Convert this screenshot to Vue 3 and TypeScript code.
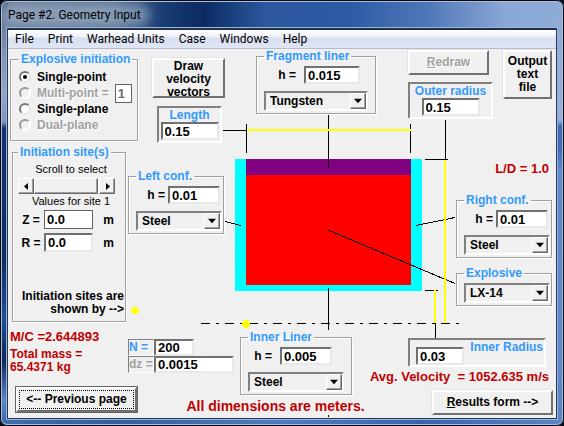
<script setup lang="ts">
import { reactive, ref } from 'vue'

const menus = ['File', 'Print', 'Warhead Units', 'Case', 'Windows', 'Help']
const materials = ['Steel', 'Tungsten', 'Aluminum', 'Copper']
const explosives = ['LX-14', 'Comp B', 'Octol']

const modes = [
  { id: 'single-point', label: 'Single-point', disabled: false },
  { id: 'multi-point', label: 'Multi-point =', disabled: true },
  { id: 'single-plane', label: 'Single-plane', disabled: false },
  { id: 'dual-plane', label: 'Dual-plane', disabled: true },
]

const mode = ref('single-point')
const site = ref(1)
const form = reactive({
  points: '1',
  z: '0.0',
  r: '0.0',
  length: '0.15',
  outerRadius: '0.15',
  innerRadius: '0.03',
  n: '200',
  dz: '0.0015',
  explosive: 'LX-14',
  fragment: { h: '0.015', material: 'Tungsten' },
  left: { h: '0.01', material: 'Steel' },
  right: { h: '0.01', material: 'Steel' },
  inner: { h: '0.005', material: 'Steel' },
})
</script>

<template>
  <div class="window">
    <header class="titlebar"><span class="title">Page #2. Geometry Input</span></header>
    <div class="client">
      <nav class="menu">
        <a v-for="item in menus" :key="item" href="#">{{ item }}</a>
      </nav>
      <main class="form">
        <svg class="drawing" viewBox="0 49 548 369" preserveAspectRatio="none" aria-hidden="true">
          <g transform="translate(-8 0)" shape-rendering="crispEdges">
            <rect x="235" y="159" width="187" height="132" fill="#00ffff" />
            <rect x="246" y="175" width="165" height="110" fill="#ff0000" />
            <rect x="246" y="159" width="165" height="16" fill="#800080" />
            <g stroke="#000" fill="none">
              <path d="M223 130.500H246M246.500 124V153M410.500 124V153M328.500 115V168" />
              <path d="M445.500 120V160M425 159.500H448M425 290.500H438M435.500 323V338M328.500 288V330" />
              <path d="M201 323.500H460" stroke-dasharray="9 6 3 6" />
              <path d="M328.500 395V396M328.500 415V417" />
              <path d="M225 221.500L241 225.500M416 225.500L455 217.500M328 230L455 283.500" />
            </g>
            <g fill="#ffff00">
              <rect x="247" y="129" width="164" height="2" />
              <rect x="444" y="160" width="2" height="163" />
              <rect x="434" y="290" width="2" height="33" />
              <ellipse cx="135" cy="310.500" rx="4" ry="3.300" />
              <circle cx="246" cy="324" r="4" />
            </g>
          </g>
        </svg>

        <div class="columns">
          <div class="col col-a">
            <fieldset class="group modes">
              <legend>Explosive initiation</legend>
              <div v-for="m in modes" :key="m.id" class="mode">
                <input :id="m.id" v-model="mode" type="radio" name="mode" :value="m.id" :disabled="m.disabled" />
                <label :for="m.id" :class="{ off: m.disabled }">{{ m.label }}</label>
                <input v-if="m.id === 'multi-point'" v-model="form.points" class="box flat points" aria-label="Number of points" disabled />
              </div>
            </fieldset>

            <fieldset class="group sites">
              <legend>Initiation site(s)</legend>
              <label class="thin" for="site">Scroll to select</label>
              <div class="scroller">
                <button type="button" aria-label="Previous site"><svg viewBox="0 0 5 7"><path d="M4 0V7L0 3.500Z" /></svg></button>
                <input id="site" v-model.number="site" type="range" min="1" max="2" />
                <button type="button" aria-label="Next site"><svg viewBox="0 0 5 7"><path d="M1 0V7L5 3.500Z" /></svg></button>
              </div>
              <p class="thin">Values for site {{ site }}</p>
              <div class="coord">
                <label for="z">Z =</label><input id="z" v-model="form.z" class="box flat" /><span>m</span>
              </div>
              <div class="coord">
                <label for="r">R =</label><input id="r" v-model="form.r" class="box" /><span>m</span>
              </div>
              <p class="hint">Initiation sites are<br />shown by --&gt;</p>
            </fieldset>

            <p class="result ratio">M/C =2.644893</p>
            <p class="mass">Total mass =<br />65.4371 kg</p>
          </div>

          <div class="col col-b">
            <button type="button" class="btn draw">Draw<br />velocity<br />vectors</button>
            <div class="panel length">
              <label for="length">Length</label>
              <input id="length" v-model="form.length" class="box" />
            </div>
            <fieldset class="group left">
              <legend>Left conf.</legend>
              <div class="row"><label for="left-h">h =</label><input id="left-h" v-model="form.left.h" class="box" /></div>
              <div class="combo">
                <select v-model="form.left.material" aria-label="Left material"><option v-for="m in materials" :key="m">{{ m }}</option></select>
                <svg viewBox="0 0 7 4"><path d="M0 0H7L3.500 4Z" /></svg>
              </div>
            </fieldset>
            <div class="mesh">
              <label for="n">N =</label><input id="n" v-model="form.n" class="box short" />
              <label for="dz" class="grey">dz =</label><input id="dz" v-model="form.dz" class="box" />
            </div>
          </div>

          <div class="col col-c">
            <fieldset class="group fragment">
              <legend>Fragment liner</legend>
              <div class="row"><label for="frag-h">h =</label><input id="frag-h" v-model="form.fragment.h" class="box" /></div>
              <div class="combo">
                <select v-model="form.fragment.material" aria-label="Fragment material"><option v-for="m in materials" :key="m">{{ m }}</option></select>
                <svg viewBox="0 0 7 4"><path d="M0 0H7L3.500 4Z" /></svg>
              </div>
            </fieldset>
            <fieldset class="group inner">
              <legend>Inner Liner</legend>
              <div class="row"><label for="inner-h">h =</label><input id="inner-h" v-model="form.inner.h" class="box" /></div>
              <div class="combo">
                <select v-model="form.inner.material" aria-label="Inner material"><option v-for="m in materials" :key="m">{{ m }}</option></select>
                <svg viewBox="0 0 7 4"><path d="M0 0H7L3.500 4Z" /></svg>
              </div>
            </fieldset>
          </div>

          <div class="col col-d">
            <div class="top-right">
              <div class="stack">
                <button type="button" class="btn redraw" disabled><u>R</u>edraw</button>
                <div class="panel outer">
                  <label for="outer">Outer radius</label>
                  <input id="outer" v-model="form.outerRadius" class="box" />
                </div>
              </div>
              <button type="button" class="btn output">Output<br />text<br />file</button>
            </div>
            <p class="result ld">L/D = 1.0</p>
            <fieldset class="group right">
              <legend>Right conf.</legend>
              <div class="row"><label for="right-h">h =</label><input id="right-h" v-model="form.right.h" class="box" /></div>
              <div class="combo">
                <select v-model="form.right.material" aria-label="Right material"><option v-for="m in materials" :key="m">{{ m }}</option></select>
                <svg viewBox="0 0 7 4"><path d="M0 0H7L3.500 4Z" /></svg>
              </div>
            </fieldset>
            <fieldset class="group right explosive">
              <legend>Explosive</legend>
              <div class="combo">
                <select v-model="form.explosive" aria-label="Explosive"><option v-for="m in explosives" :key="m">{{ m }}</option></select>
                <svg viewBox="0 0 7 4"><path d="M0 0H7L3.500 4Z" /></svg>
              </div>
            </fieldset>
            <div class="panel inner-radius">
              <input id="inner-radius" v-model="form.innerRadius" class="box" />
              <label for="inner-radius">Inner Radius</label>
            </div>
            <p class="result velocity">Avg. Velocity&nbsp; = 1052.635 m/s</p>
          </div>
        </div>

        <footer class="footer">
          <button type="button" class="btn default"><span>&lt;-- Previous page</span></button>
          <p class="note">All dimensions are meters.</p>
          <button type="button" class="btn next"><span><u>R</u>esults form --&gt;</span></button>
        </footer>
      </main>
    </div>
  </div>
</template>

<style>
body {
  margin: 0;
  background: #05070f;
}
</style>

<style scoped>
* {
  box-sizing: border-box;
}

.window {
  min-height: 100vh;
  display: flex;
  flex-direction: column;
  padding: 0 8px 8px;
  border-radius: 7px;
  overflow: hidden;
  font: bold 12px/14px 'Liberation Sans', Arial, sans-serif;
  color: #000;
  box-shadow: inset 0 0 0 1px #05070f, inset 0 0 0 2px #a9bedb;
  background:
    linear-gradient(#56708f 0, #8796b5 60px, #93a4cb 95px, #8192bb 122px, #12336c 128px, #0e2c60 260px, #1e5296 320px, #0c2659 360px, #5c87c4 400px, #3465a8) left / 8px 100% no-repeat,
    linear-gradient(#8eabd6, #97afd9 120px, #3f6cb5 126px, #3f6cb5 150px, #5c8acb 170px, #5c85c4) right / 8px 100% no-repeat,
    linear-gradient(90deg, #3a6fae, #31609f 20%, #4c7dc0 50%, #3665ae 75%, #5b86c6) bottom / 100% 8px no-repeat,
    linear-gradient(90deg, #6c7f9c, #5d7694 20%, #183c73 29%, #0c2b62 36%, #2b579e 47%, #2c5ba4 62%, #4f78b9 76%, #8ca8d6 90%, #8eabd8);
}

.titlebar {
  height: 29px;
  display: flex;
  align-items: center;
  font: 12px/12px Roboto, 'Noto Sans', sans-serif;
}

.title {
  padding: 0 4px 0 0;
  border-radius: 6px;
  background: rgba(190, 205, 225, 0.4);
  box-shadow: 0 0 8px 5px rgba(190, 205, 225, 0.4);
}

.client {
  flex: 1;
  display: flex;
  flex-direction: column;
  border-top: 1px solid #1c2b46;
  box-shadow: 0 0 0 1px #22365c, 0 0 0 2px #9db4d6;
}

.menu {
  height: 19px;
  display: flex;
  gap: 14px;
  padding: 0 7px;
  background: linear-gradient(#fff 0, #eef1f9 7px, #d8dff0 8px, #dfe5f5 17px);
  border-bottom: 1px solid #b6bccc;
  font: 12px/19px Roboto, 'Noto Sans', sans-serif;
}

.menu a {
  color: #000;
  text-decoration: none;
}

.form {
  position: relative;
  flex: 1;
  background: #f0f0f0;
}

.drawing {
  position: absolute;
  inset: 0;
  width: 100%;
  height: 100%;
}

.columns {
  position: relative;
  display: grid;
  grid-template-columns: 120fr 112fr 160fr 156fr;
}

.col {
  display: flex;
  flex-direction: column;
  align-items: flex-start;
  min-width: 0;
}

p {
  margin: 0;
  white-space: nowrap;
}

label {
  white-space: nowrap;
}

/* etched frames */
.group {
  margin: 0;
  min-width: 0;
  padding: 3px 7px 2px;
  border: 1px solid #a0a0a0;
  box-shadow: 1px 1px 0 #fff, inset 1px 1px 0 #fff;
}

.group legend {
  height: 14px;
  padding: 0 2px;
  color: #3399ff;
  white-space: nowrap;
}

.row {
  display: flex;
  align-items: center;
  justify-content: flex-end;
  gap: 8px;
  height: 18px;
  margin-bottom: 7px;
}

/* text boxes */
.box {
  width: 52px;
  height: 18px;
  margin: 0;
  padding: 0 2px;
  border: 2px solid;
  border-color: #707070 #e8e8e8 #e8e8e8 #707070;
  background: #fff;
  color: #000;
  font: bold 13px/14px 'Liberation Sans', Arial, sans-serif;
  outline: none;
}

.box.flat {
  border: 1px solid #646464;
}

/* drop-downs */
.combo {
  display: grid;
  align-items: center;
  height: 20px;
  border: 2px solid;
  border-color: #808080 #fff #fff #808080;
}

.combo select,
.combo svg {
  grid-area: 1 / 1;
}

.combo select {
  width: 100%;
  height: 16px;
  padding: 0 18px 0 4px;
  border: 0;
  border-radius: 0;
  appearance: none;
  background: transparent;
  color: #000;
  font: inherit;
}

.combo svg {
  justify-self: end;
  width: 16px;
  height: 16px;
  padding: 4px 3px;
  border: 1px solid;
  border-color: #fff #696969 #696969 #fff;
  box-shadow: inset -1px -1px 0 #a0a0a0;
  background: #f0f0f0;
  pointer-events: none;
}

/* push buttons */
.btn {
  padding: 0;
  border: 2px solid;
  border-color: #fff #707070 #707070 #fff;
  box-shadow: -1px -1px 0 #e3e3e3;
  background: #f0f0f0;
  color: #000;
  font: inherit;
  line-height: 13px;
  white-space: nowrap;
}

.btn:disabled {
  color: #a0a0a0;
  text-shadow: 1px 1px 0 #fff;
}

/* sunken panels */
.panel {
  display: flex;
  border: 2px solid;
  border-color: #808080 #fff #fff #808080;
  color: #3399ff;
}

.col-a {
  padding: 3px 0 0 2px;
}

.modes {
  width: 128px;
  height: 89px;
  padding: 3px 6px 2px 8px;
}

.mode {
  display: flex;
  align-items: center;
  gap: 6px;
  height: 16px;
}

.mode input[type='radio'] {
  appearance: none;
  flex: none;
  display: grid;
  place-items: center;
  width: 12px;
  height: 12px;
  margin: 0;
  border: 2px solid;
  border-color: #777 #e6e6e6 #e6e6e6 #777;
  border-radius: 50%;
  background: #fff;
}

.mode input[type='radio']:disabled {
  border-color: #999 #fff #fff #999;
  background: #f0f0f0;
}

.mode input[type='radio']:checked::after {
  content: '';
  width: 4px;
  height: 4px;
  border-radius: 50%;
  background: #000;
}

.off {
  color: #a0a0a0;
  text-shadow: 1px 1px 0 #fff;
}

.points {
  flex: none;
  width: 17px;
  height: 19px;
  margin-left: auto;
  color: #6d6d6d;
}

.sites {
  width: 114px;
  height: 177px;
  margin: 4px 0 0 2px;
  padding: 3px 1px 2px 5px;
}

.thin {
  display: block;
  font-size: 11px;
  font-weight: normal;
  text-align: center;
}

.scroller {
  display: flex;
  width: 97px;
  height: 16px;
  margin: 2px 0 0;
}

.scroller button {
  flex: none;
  display: grid;
  place-items: center;
  width: 16px;
  padding: 0;
  border: 1px solid;
  border-color: #fff #696969 #696969 #fff;
  box-shadow: inset -1px -1px 0 #a0a0a0;
  background: #f0f0f0;
}

.scroller svg {
  width: 5px;
  height: 7px;
}

.scroller input {
  appearance: none;
  flex: 1;
  min-width: 0;
  height: 16px;
  margin: 0;
  background: #f8f8f8;
}

.scroller input::-webkit-slider-thumb {
  appearance: none;
  width: 64px;
  height: 16px;
  border: 1px solid;
  border-color: #fff #696969 #696969 #fff;
  box-shadow: inset -1px -1px 0 #a0a0a0;
  background: #f0f0f0;
}

.coord {
  display: grid;
  grid-template-columns: 26px 49px 1fr;
  align-items: center;
  justify-items: center;
  height: 19px;
  margin-top: 2px;
}

.coord + .coord {
  margin-top: 4px;
}

.coord .box {
  width: 49px;
  height: 19px;
}

.hint {
  margin-top: 38px;
  line-height: 13px;
  text-align: right;
}

.result {
  color: #c00000;
  font-size: 13px;
}

.ratio {
  margin-top: 8px;
}

.mass {
  margin-top: 4px;
  color: #c00000;
  line-height: 13px;
}

.col-b {
  padding-top: 9px;
}

.draw {
  width: 73px;
  height: 40px;
  margin-left: 24px;
}

.length {
  flex-direction: column;
  align-items: center;
  width: 65px;
  height: 37px;
  margin: 8px 0 0 29px;
}

.length .box,
.outer .box {
  width: 58px;
}

.left {
  width: 96px;
  margin-top: 26px;
}

.left,
.right {
  padding-right: 1px;
}

.left .row,
.right .row {
  gap: 3px;
  padding-right: 2px;
}

.mesh {
  display: grid;
  grid-template-columns: 26px 80px;
  grid-auto-rows: 17px;
  margin-top: 105px;
}

.mesh label {
  border: 1px solid;
  border-color: #808080 #fff #fff #808080;
  color: #3399ff;
}

.mesh label.grey {
  color: #a0a0a0;
}

.mesh .box {
  width: 80px;
  height: 17px;
}

.mesh .short {
  width: 40px;
}

.fragment {
  width: 120px;
  margin-left: 16px;
}

.fragment .row {
  padding-right: 8px;
}

.fragment .box {
  width: 56px;
}

.inner {
  width: 112px;
  margin-top: 216px;
}

.inner .row {
  padding-right: 12px;
}

.col-d {
  padding: 1px 4px 0 8px;
}

.top-right {
  align-self: stretch;
  display: flex;
  justify-content: space-between;
  align-items: flex-start;
}

.redraw {
  width: 81px;
  height: 25px;
}

.outer {
  flex-direction: column;
  align-items: center;
  width: 85px;
  height: 37px;
  margin-top: 7px;
}

.output {
  width: 49px;
  height: 49px;
}

.ld {
  align-self: flex-end;
  margin: 43px 3px 0 0;
}

.right {
  align-self: flex-end;
  width: 96px;
  margin-top: 17px;
}

.explosive {
  margin-top: 8px;
}

.inner-radius {
  justify-content: space-between;
  width: 138px;
  height: 29px;
  margin-top: 32px;
  padding: 0 1px 0 6px;
}

.inner-radius .box {
  align-self: flex-end;
  width: 48px;
}

.velocity {
  align-self: flex-end;
  margin: 3px 3px 0 0;
}

.footer {
  position: relative;
  display: flex;
  justify-content: space-between;
  margin-top: -8px;
  padding: 0 3px 3px 8px;
}

.footer .btn {
  width: 121px;
  height: 25px;
}

.default {
  padding: 1px;
  outline: 1px solid #646464;
}

.default span {
  display: block;
  padding: 2px 0;
  border: 1px dotted #000;
}

.next {
  margin-top: 3px;
}

.note {
  padding: 10px 18px 0 0;
  color: #c00000;
  font-size: 14px;
  line-height: 18px;
}
</style>
